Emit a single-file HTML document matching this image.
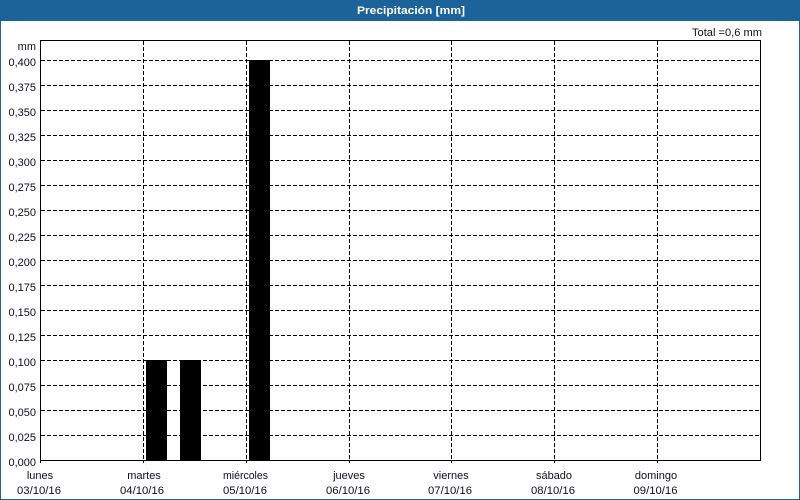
<!DOCTYPE html>
<html lang="es"><head><meta charset="utf-8"><title>Precipitación [mm]</title>
<style>
html,body{margin:0;padding:0;width:800px;height:500px;overflow:hidden;background:#fdfefd}
svg{display:block}
text{font-family:"Liberation Sans",sans-serif;font-size:11px;fill:#10101c}
.b{font-weight:700;fill:#fff;font-size:11px}
.g{stroke:#000;stroke-width:1;stroke-dasharray:4 2;fill:none}
</style></head><body>
<svg width="800" height="500" viewBox="0 0 800 500" xmlns="http://www.w3.org/2000/svg">
<rect width="800" height="500" fill="#fdfefd"/>
<g shape-rendering="crispEdges">
<rect x="0" y="0" width="800" height="21" fill="#1c6399"/>
<rect x="0" y="0" width="1" height="500" fill="#1c6399"/>
<rect x="799" y="0" width="1" height="500" fill="#1c6399"/>
<rect x="0" y="499" width="800" height="1" fill="#1c6399"/>
<path class="g" d="M41 60.5H760M41 85.5H760M41 110.5H760M41 135.5H760M41 160.5H760M41 185.5H760M41 210.5H760M41 235.5H760M41 260.5H760M41 285.5H760M41 310.5H760M41 335.5H760M41 360.5H760M41 385.5H760M41 410.5H760M41 435.5H760"/>
<path class="g" d="M143.5 41V463M246.5 41V463M349.5 41V463M451.5 41V463M554.5 41V463M657.5 41V463"/>
<rect x="146" y="360" width="21" height="101" fill="#000"/>
<rect x="180" y="360" width="21" height="101" fill="#000"/>
<rect x="249" y="60" width="21" height="401" fill="#000"/>
<path d="M40.5 463V40.5H760.5V460.5H40.5" fill="none" stroke="#000"/>
</g>
<text class="b" x="411" y="14" text-anchor="middle" textLength="108" lengthAdjust="spacingAndGlyphs">Precipitación [mm]</text>
<text x="692" y="36" textLength="70" lengthAdjust="spacingAndGlyphs">Total =0,6 mm</text>
<g text-anchor="end">
<text x="36" y="50">mm</text>
<text x="36" y="66">0,400</text><text x="36" y="91">0,375</text><text x="36" y="116">0,350</text><text x="36" y="141">0,325</text>
<text x="36" y="166">0,300</text><text x="36" y="191">0,275</text><text x="36" y="216">0,250</text><text x="36" y="241">0,225</text>
<text x="36" y="266">0,200</text><text x="36" y="291">0,175</text><text x="36" y="316">0,150</text><text x="36" y="341">0,125</text>
<text x="36" y="366">0,100</text><text x="36" y="391">0,075</text><text x="36" y="416">0,050</text><text x="36" y="441">0,025</text>
<text x="36" y="466">0,000</text>
</g>
<g text-anchor="middle">
<text x="40" y="479">lunes</text><text x="39" y="494" textLength="44" lengthAdjust="spacingAndGlyphs">03/10/16</text>
<text x="144" y="479">martes</text><text x="142" y="494" textLength="44" lengthAdjust="spacingAndGlyphs">04/10/16</text>
<text x="245.5" y="479" textLength="45" lengthAdjust="spacingAndGlyphs">miércoles</text><text x="245" y="494" textLength="44" lengthAdjust="spacingAndGlyphs">05/10/16</text>
<text x="349" y="479">jueves</text><text x="348" y="494" textLength="44" lengthAdjust="spacingAndGlyphs">06/10/16</text>
<text x="451" y="479">viernes</text><text x="450" y="494" textLength="44" lengthAdjust="spacingAndGlyphs">07/10/16</text>
<text x="554" y="479">sábado</text><text x="553" y="494" textLength="44" lengthAdjust="spacingAndGlyphs">08/10/16</text>
<text x="656" y="479">domingo</text><text x="655.5" y="494" textLength="44" lengthAdjust="spacingAndGlyphs">09/10/16</text>
</g>
</svg>
</body></html>
